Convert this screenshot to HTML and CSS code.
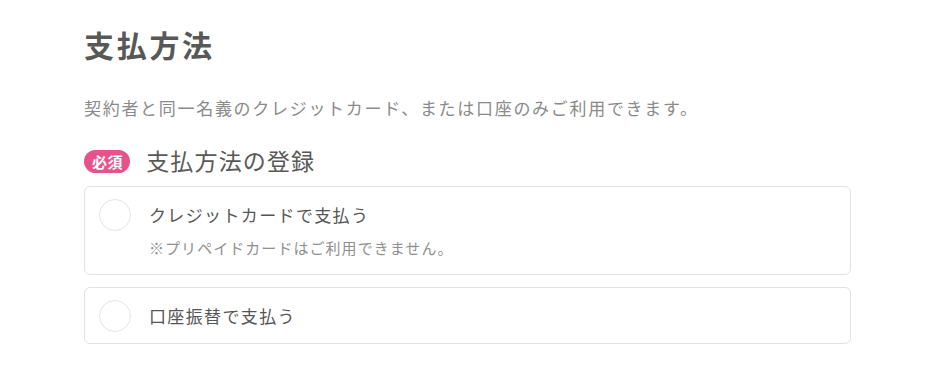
FILE: index.html
```html
<!DOCTYPE html>
<html lang="ja">
<head>
<meta charset="utf-8">
<link rel="stylesheet" href="styles.css">
</head>
<body>
<main class="page">
  <h1 class="title">支払方法</h1>
  <p class="desc">契約者と同一名義のクレジットカード、または口座のみご利用できます。</p>
  <div class="section-head">
    <span class="badge">必須</span>
    <h2 class="section-title">支払方法の登録</h2>
  </div>
  <div class="options">
    <label class="option">
      <span class="radio"></span>
      <span class="option-body">
        <span class="option-label">クレジットカードで支払う</span>
        <span class="option-note">※プリペイドカードはご利用できません。</span>
      </span>
    </label>
    <label class="option">
      <span class="radio"></span>
      <span class="option-body">
        <span class="option-label">口座振替で支払う</span>
      </span>
    </label>
  </div>
</main>
</body>
</html>
```
FILE: styles.css
```css
* { box-sizing: border-box; }
html, body {
  margin: 0;
  padding: 0;
  background: #fff;
}
body {
  font-family: "Noto Sans CJK JP", "Noto Sans", sans-serif;
  color: #555;
}
.page {
  width: 767px;
  margin-left: 84px;
  padding-top: 24px;
}
.title {
  margin: 0;
  font-size: 30px;
  line-height: 40px;
  font-weight: 700;
  letter-spacing: 0.09em;
  color: #585858;
}
.desc {
  margin: 32px 0 0;
  font-size: 17px;
  line-height: 24px;
  letter-spacing: 0.1em;
  color: #8a8a8a;
}
.section-head {
  margin-top: 25px;
  display: flex;
  align-items: center;
  height: 32px;
}
.badge {
  display: inline-block;
  height: 23px;
  line-height: 23px;
  padding: 0 7px 0 8px;
  border-radius: 12px;
  background: #e8528a;
  color: #fff;
  font-size: 15px;
  font-weight: 700;
  letter-spacing: 0.04em;
}
.section-title {
  margin: -2px 0 0 16px;
  font-size: 23px;
  line-height: 32px;
  font-weight: 400;
  letter-spacing: 0.05em;
  color: #595959;
}
.options {
  margin-top: 9px;
  display: flex;
  flex-direction: column;
  gap: 12px;
}
.option {
  display: flex;
  align-items: flex-start;
  border: 1px solid #e2e2e2;
  border-radius: 6px;
  padding: 12px 14px 11px;
}
.radio {
  flex: none;
  width: 32px;
  height: 32px;
  border: 1px solid #e4e4e4;
  border-radius: 50%;
  background: #fff;
}
.option-body {
  display: flex;
  flex-direction: column;
  margin-left: 18px;
}
.option-label {
  font-size: 17px;
  line-height: 32px;
  letter-spacing: 0.08em;
  color: #555;
}
.option-note {
  margin-top: 7px;
  margin-bottom: 5px;
  font-size: 15px;
  line-height: 20px;
  letter-spacing: 0.07em;
  color: #8f8f8f;
}
```
